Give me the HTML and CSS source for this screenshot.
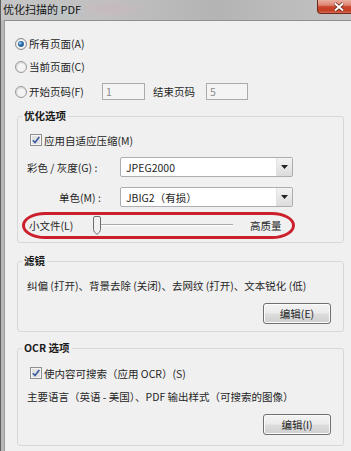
FILE: index.html
```html
<!DOCTYPE html>
<html lang="zh-CN">
<head>
<meta charset="utf-8">
<title>优化扫描的 PDF</title>
<link rel="stylesheet" href="styles.css">
</head>
<body>
<div class="window">
  <div class="titlebar">
    <span class="title">优化扫描的 PDF</span>
    <span class="close">
      <svg width="12" height="10" viewBox="0 0 12 10"><path d="M2 1.5 L10 8.5 M10 1.5 L2 8.5" stroke="#5a2016" stroke-width="3.4"/><path d="M2 1.5 L10 8.5 M10 1.5 L2 8.5" stroke="#fff" stroke-width="2"/></svg>
    </span>
  </div>
  <div class="client">
    <div class="pages">
      <div class="prow r1">
        <svg class="radio" width="12" height="12" viewBox="0 0 12 12"><circle cx="6" cy="6" r="5.5" fill="#e4e4e4" stroke="#8a8b8b"/><circle cx="6" cy="6" r="4.3" fill="#f6f6f6"/><circle cx="6" cy="6" r="3" fill="#2b6aa3"/><circle cx="5.2" cy="5.2" r="1.3" fill="#8ec4ec"/></svg>
        <span>所有页面(A)</span>
      </div>
      <div class="prow r2">
        <svg class="radio" width="12" height="12" viewBox="0 0 12 12"><circle cx="6" cy="6" r="5.5" fill="#dedede" stroke="#9a9b9b"/><circle cx="6.4" cy="6.4" r="4" fill="#f4f4f4"/></svg>
        <span>当前页面(C)</span>
      </div>
      <div class="prow r3">
        <span class="radio-label">
          <svg class="radio" width="12" height="12" viewBox="0 0 12 12"><circle cx="6" cy="6" r="5.5" fill="#dedede" stroke="#9a9b9b"/><circle cx="6.4" cy="6.4" r="4" fill="#f4f4f4"/></svg>
          <span>开始页码(F)</span>
        </span>
        <span class="field">1</span>
        <span class="end-label">结束页码</span>
        <span class="field f2">5</span>
      </div>
    </div>

    <div class="group g1">
      <div class="legend">优化选项</div>
      <div class="check-row c1">
        <svg class="check" width="12" height="12" viewBox="0 0 12 12"><rect x=".5" y=".5" width="11" height="11" fill="#f6f6f6" stroke="#8e8f8f"/><rect x="2" y="2" width="8" height="8" fill="#e2e2e2"/><path d="M2.8 6.2 L5 8.5 L9.3 3.1" fill="none" stroke="#3a5aa2" stroke-width="1.6"/></svg>
        <span>应用自适应压缩(M)</span>
      </div>
      <div class="sel-row s1">
        <span class="sel-label">彩色 / 灰度(G) :</span>
        <div class="select">
          <span>JPEG2000</span>
          <span class="drop"><svg width="7" height="4" viewBox="0 0 7 4"><path d="M0 0h7L3.5 4z" fill="#222"/></svg></span>
        </div>
      </div>
      <div class="sel-row s2">
        <span class="sel-label indent">单色(M) :</span>
        <div class="select">
          <span>JBIG2（有损）</span>
          <span class="drop"><svg width="7" height="4" viewBox="0 0 7 4"><path d="M0 0h7L3.5 4z" fill="#222"/></svg></span>
        </div>
      </div>
      <div class="slider-row">
        <span class="sl-label">小文件(L)</span>
        <div class="slider">
          <svg width="10" height="19" viewBox="0 0 10 19"><path d="M1.5 2 Q1.5 .5 3 .5 H7 Q8.5 .5 8.5 2 V13.5 Q8.5 15 7 16.5 L5 18.5 L3 16.5 Q1.5 15 1.5 13.5 Z" fill="#f1f1f1" stroke="#6d6d6d"/></svg>
        </div>
        <span class="hq">高质量</span>
        <div class="mark"></div>
      </div>
    </div>

    <div class="group g2">
      <div class="legend">滤镜</div>
      <div class="text-row t1">纠偏 (打开)、背景去除 (关闭)、去网纹 (打开)、文本锐化 (低)</div>
      <div class="btn-row"><span class="btn">编辑(E)</span></div>
    </div>

    <div class="group g3">
      <div class="legend">OCR 选项</div>
      <div class="check-row c2">
        <svg class="check" width="12" height="12" viewBox="0 0 12 12"><rect x=".5" y=".5" width="11" height="11" fill="#f6f6f6" stroke="#8e8f8f"/><rect x="2" y="2" width="8" height="8" fill="#e2e2e2"/><path d="M2.8 6.2 L5 8.5 L9.3 3.1" fill="none" stroke="#3a5aa2" stroke-width="1.6"/></svg>
        <span>使内容可搜索（应用 OCR）(S)</span>
      </div>
      <div class="text-row t2">主要语言（英语 - 美国）、PDF 输出样式（可搜索的图像）</div>
      <div class="btn-row"><span class="btn">编辑(I)</span></div>
    </div>
  </div>
</div>
</body>
</html>
```

FILE: styles.css
```css
* { box-sizing: border-box; }

html, body {
  margin: 0;
  overflow: hidden;
}

body {
  width: 351px;
  height: 451px;
  background: #f0f0f0;
  font-family: "Noto Sans CJK SC", "Noto Sans", sans-serif;
  font-size: 10.5px;
  color: #262626;
}

.window {
  width: 361px;
  height: 451px;
  background: #b8b8b8;
  border-left: 1px solid #5f5f5f;
  border-right: 1px solid #5f5f5f;
}

.titlebar {
  height: 20px;
  display: flex;
  justify-content: space-between;
  align-items: flex-start;
  padding-left: 2px;
  background:
    radial-gradient(ellipse 40px 10px at 110px 9px, rgba(205, 180, 190, 0.55), rgba(205, 180, 190, 0)),
    radial-gradient(ellipse 30px 8px at 60px 12px, rgba(180, 200, 205, 0.5), rgba(180, 200, 205, 0)),
    linear-gradient(to right, #c6c6c6, #c0c0c0 30%, #b4b4b4 60%, #bebebe 85%, #c4c4c4);
}

.title {
  font-size: 11px;
  line-height: 19px;
  color: #141414;
}

.close {
  width: 43px;
  height: 14px;
  display: flex;
  align-items: center;
  justify-content: center;
  border: 1px solid #6d2a1d;
  border-top: none;
  border-radius: 0 0 4px 4px;
  background: linear-gradient(#eab0a3 0%, #df8470 40%, #c9462d 52%, #c43f25 80%, #d66a52 100%);
}

.client {
  margin: 0 3px;
  height: 431px;
  background: #f0f0f0;
  border-top: 1px solid #8e8e8e;
  border-left: 1px solid #9c9c9c;
  border-right: 1px solid #9c9c9c;
}

.pages {
  padding-left: 10px;
}

.prow {
  display: flex;
  align-items: center;
  height: 17px;
  line-height: 17px;
}

.r1 { margin-top: 14px; }
.r2 { margin-top: 6px; }
.r3 { margin-top: 8px; }

.radio {
  margin-right: 2px;
  flex-shrink: 0;
}

.radio-label {
  display: flex;
  align-items: center;
  width: 87px;
}

.field {
  width: 43px;
  height: 17px;
  line-height: 15px;
  padding-left: 3px;
  border: 1px solid #ababab;
  background: #f4f4f4;
  color: #8a8a8a;
}

.f2 { width: 42px; }

.end-label {
  margin: 0 11px 0 8px;
}

.group {
  margin: 16px 12px 0 12px;
  padding: 0 12px 7px 9px;
  border: 1px solid #d5d9dc;
  border-radius: 3px;
}

.g2 { margin-top: 18px; }
.g3 { margin-top: 16px; padding-bottom: 10px; }

.legend {
  display: table;
  height: 16px;
  line-height: 16px;
  margin: -9px 0 0 -5px;
  padding: 0 2px;
  background: #f0f0f0;
  font-weight: bold;
  color: #1a1a1a;
}

.check-row {
  display: flex;
  align-items: center;
  height: 18px;
  padding-left: 3px;
}

.c1 { margin-top: 7px; }
.c2 { margin-top: 8px; }

.check {
  margin-right: 2px;
  flex-shrink: 0;
}

.sel-row {
  display: flex;
  align-items: center;
  height: 20px;
}

.s1 { margin-top: 8px; }
.s2 { margin-top: 10px; }

.sel-label {
  width: 93px;
  flex-shrink: 0;
}

.indent { padding-left: 32px; }

.select {
  width: 173px;
  height: 20px;
  display: flex;
  align-items: center;
  justify-content: space-between;
  padding-left: 5px;
  border: 1px solid #abadb3;
  border-radius: 2px;
  background: #ffffff;
}

.drop {
  width: 16px;
  height: 18px;
  display: flex;
  align-items: center;
  justify-content: center;
  background: linear-gradient(#f3f3f3, #dcdcdc);
  border-left: 1px solid #e2e2e2;
}

.slider-row {
  position: relative;
  display: flex;
  align-items: center;
  height: 20px;
  margin-top: 8px;
}

.sl-label {
  width: 65px;
  padding-left: 2px;
  flex-shrink: 0;
}

.slider {
  width: 141px;
  height: 20px;
  display: flex;
  align-items: center;
  background:
    linear-gradient(#a9a9a9, #a9a9a9) 4px 9px / 137px 1px no-repeat,
    linear-gradient(#ffffff, #ffffff) 4px 10px / 137px 1px no-repeat;
}

.hq {
  margin-left: 17px;
}

.mark {
  position: absolute;
  left: -5px;
  top: -3px;
  width: 273px;
  height: 27px;
  border: 3px solid #cc1f2c;
  border-radius: 24px / 14px;
}

.text-row {
  height: 16px;
  line-height: 16px;
  white-space: nowrap;
}

.t1 { margin-top: 9px; }
.t2 { margin-top: 7px; }

.btn-row {
  display: flex;
  justify-content: flex-end;
  margin-top: 9px;
}

.btn {
  width: 68px;
  height: 21px;
  display: flex;
  align-items: center;
  justify-content: center;
  border: 1px solid #707070;
  border-radius: 3px;
  background: linear-gradient(#f3f3f3 0%, #ebebeb 48%, #dddddd 52%, #cfcfcf 100%);
  box-shadow: inset 0 0 0 1px #fbfbfb;
}
```
